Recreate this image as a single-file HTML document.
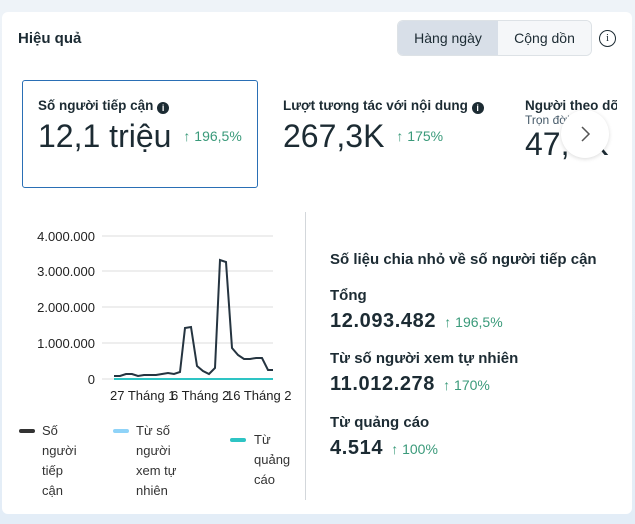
<!DOCTYPE html><html><head><meta charset="utf-8"><style>
*{margin:0;padding:0;box-sizing:border-box}
body{width:635px;height:524px;overflow:hidden;background:linear-gradient(180deg,#eef3f8,#e3edf7);font-family:"Liberation Sans","Noto Sans CJK SC",sans-serif;color:#1c2b33;position:relative}
.card{position:absolute;left:2px;top:12px;width:630px;height:502px;background:#fff;border-radius:6px;overflow:hidden}
.a{position:absolute;white-space:nowrap}
.b{font-weight:bold}
.g{color:#3a9a7a}
</style></head><body>
<div class="card"></div>
<div class="a b" style="left:18px;top:30px;font-size:15px">Hiệu quả</div>
<div class="a" style="left:397px;top:20px;width:195px;height:36px;border:1px solid #dde2e6;border-radius:6px;overflow:hidden;display:flex;font-size:14px">
<div style="width:100px;background:#d8dfe8;display:flex;align-items:center;justify-content:center">Hàng ngày</div>
<div style="flex:1;background:#f5f7f9;display:flex;align-items:center;justify-content:center">Cộng dồn</div></div>
<div class="a" style="left:599px;top:30px;width:17px;height:17px;border:1.3px solid #1c2b33;border-radius:50%;font-size:11px;text-align:center;line-height:15px;font-family:'Liberation Serif',serif">i</div>
<div class="a" style="left:22px;top:80px;width:236px;height:108px;border:1.5px solid #2a6fb5;border-radius:3px"></div>
<div class="a b" style="left:38px;top:98px;font-size:13.5px">Số người tiếp cận <span style="display:inline-block;width:12px;height:12px;border-radius:50%;background:#1c2b33;color:#fff;font-size:9px;text-align:center;line-height:12px;vertical-align:-1px">i</span></div>
<div class="a" style="left:38px;top:118px;font-size:32px;color:#1c2b33">12,1 triệu<span class="g" style="font-size:14px;vertical-align:6px;margin-left:12px">↑ 196,5%</span></div>
<div class="a b" style="left:283px;top:98px;font-size:13.5px">Lượt tương tác với nội dung <span style="display:inline-block;width:12px;height:12px;border-radius:50%;background:#1c2b33;color:#fff;font-size:9px;text-align:center;line-height:12px;vertical-align:-1px">i</span></div>
<div class="a" style="left:283px;top:118px;font-size:32px">267,3K<span class="g" style="font-size:14px;vertical-align:6px;margin-left:12px">↑ 175%</span></div>
<div class="a" style="left:525px;top:96px;width:92px;height:80px;overflow:hidden">
<div class="b" style="font-size:13.5px;margin-top:2px">Người theo dõi</div>
<div style="font-size:12px;color:#465a69">Trọn đời</div>
<div style="font-size:32px;line-height:34px">47,5K</div></div>
<div class="a" style="left:561px;top:110px;width:48px;height:48px;border-radius:50%;background:#fff;box-shadow:0 1px 4px rgba(0,0,0,.15)"><svg width="48" height="48"><path d="M21 17l7 7-7 7" stroke="#555" stroke-width="1.5" fill="none"/></svg></div>
<div class="a" style="left:305px;top:212px;width:1px;height:288px;background:#d3d7db"></div>
<svg class="a" style="left:0;top:225px" width="300" height="180">
<g stroke="#e4e4e4" stroke-width="1.3"><line x1="102" y1="11" x2="273" y2="11"/><line x1="102" y1="46" x2="273" y2="46"/><line x1="102" y1="82" x2="273" y2="82"/><line x1="102" y1="118" x2="273" y2="118"/><line x1="102" y1="154" x2="273" y2="154"/></g>
<g font-family="Liberation Sans" font-size="13" fill="#222" text-anchor="end"><text x="95" y="16">4.000.000</text><text x="95" y="51">3.000.000</text><text x="95" y="87">2.000.000</text><text x="95" y="123">1.000.000</text><text x="95" y="159">0</text></g>
<line x1="114" y1="154" x2="273" y2="154" stroke="#2ec4c4" stroke-width="2"/>
<polyline fill="none" stroke="#253440" stroke-width="2" points="114,151 120,151 126,149 132,149 138,151 144,150 150,150 156,150 162,149 168,148 174,149 180,147 185,103 191,102 197,141 203,146 209,149 215,143 220,35 226,37 232,123 238,130 244,134 250,134 256,133 262,133 268,145 273,145"/>
<g font-family="Liberation Sans" font-size="13" fill="#222"><text x="110" y="175">27 Tháng 1</text><text x="171" y="175">6 Tháng 2</text><text x="226" y="175">16 Tháng 2</text></g>
</svg>
<div class="a" style="left:19px;top:429px;width:16px;height:4px;border-radius:2px;background:#333"></div>
<div class="a" style="left:42px;top:421px;font-size:13px;line-height:20px;color:#333">Số<br>người<br>tiếp<br>cận</div>
<div class="a" style="left:113px;top:429px;width:16px;height:4px;border-radius:2px;background:#8fd3f8"></div>
<div class="a" style="left:136px;top:421px;font-size:13px;line-height:20px;color:#333">Từ số<br>người<br>xem tự<br>nhiên</div>
<div class="a" style="left:230px;top:438px;width:16px;height:4px;border-radius:2px;background:#2ec4c4"></div>
<div class="a" style="left:254px;top:430px;font-size:13px;line-height:20px;color:#333">Từ<br>quảng<br>cáo</div>
<div class="a b" style="left:330px;top:251px;font-size:15px">Số liệu chia nhỏ về số người tiếp cận</div>
<div class="a b" style="left:330px;top:287px;font-size:15px">Tổng</div>
<div class="a b" style="left:330px;top:310px;font-size:20px;letter-spacing:.6px">12.093.482 <span class="g" style="font-size:14px;font-weight:normal;letter-spacing:0;margin-left:2px">↑ 196,5%</span></div>
<div class="a b" style="left:330px;top:350px;font-size:15px">Từ số người xem tự nhiên</div>
<div class="a b" style="left:330px;top:373px;font-size:20px;letter-spacing:.6px">11.012.278 <span class="g" style="font-size:14px;font-weight:normal;letter-spacing:0;margin-left:2px">↑ 170%</span></div>
<div class="a b" style="left:330px;top:414px;font-size:15px">Từ quảng cáo</div>
<div class="a b" style="left:330px;top:437px;font-size:20px;letter-spacing:.6px">4.514 <span class="g" style="font-size:14px;font-weight:normal;letter-spacing:0;margin-left:2px">↑ 100%</span></div>
</body></html>
